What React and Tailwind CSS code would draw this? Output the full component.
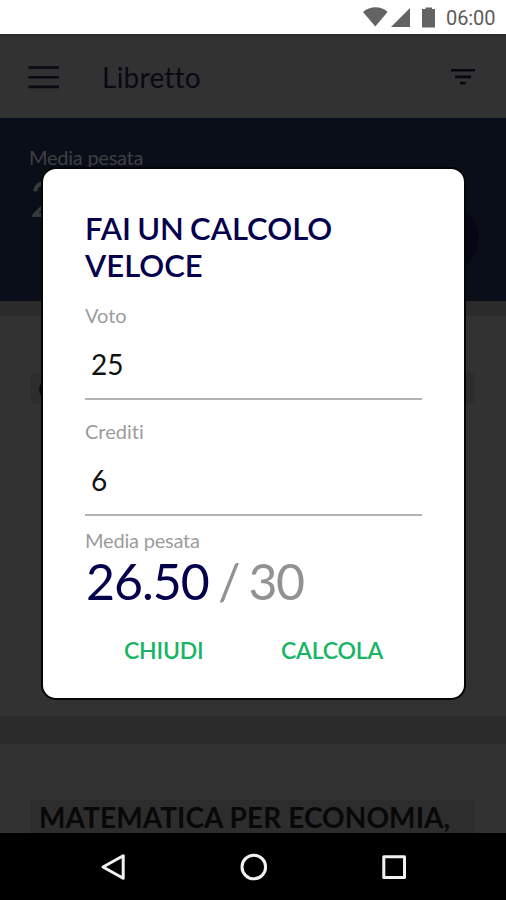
function StatusBar() {
  return (
    <header className="flex h-[34px] shrink-0 items-center justify-end bg-white pr-[10px]">
      <svg width="76" height="34" viewBox="0 0 76 34" fill="#636363" className="shrink-0">
        <path d="M0 12C7 5.8 18.5 5.8 24.5 12L12.3 26.5Z" />
        <path d="M47 8V27H28Z" />
        <path d="M62.5 7.5H69V9H72V27.5H59V9H62.5Z" />
      </svg>
      <span className="ml-[7px] w-[50px] whitespace-nowrap pt-0.5 font-[Roboto,sans-serif] text-[20px] leading-[34px] tracking-[-0.1px] text-[#5c5c5c]">06:00</span>
    </header>
  );
}

function AppBar() {
  return (
    <div className="flex h-[84px] shrink-0 items-center border-t-2 border-[#2b2b2b] pb-px pl-7 pr-[31px]">
      <svg width="31" height="24" viewBox="0 0 31 24" fill="#090a12">
        <path d="M0.5 1.2H31V3.8H0.5ZM0.5 10.9H31V13.5H0.5ZM0.5 20.6H31V23.2H0.5Z" />
      </svg>
      <h1 className="ml-[43px] flex-1 text-[28px] leading-9 tracking-[0.25px] text-[#080914]">Libretto</h1>
      <svg width="24" height="16" viewBox="0 0 24 16" fill="#060812">
        <path d="M0 0H24V2.6H0ZM4 6.5H20V9.2H4ZM9 12.8H14.6V15.6H9Z" />
      </svg>
    </div>
  );
}

function Field({ label, value, className }) {
  return (
    <label className={className}>
      <span className="block text-[20px] leading-6 text-[#9c9c9c]">{label}</span>
      <span className="mt-[18px] block h-[55px] border-b-2 border-[#b3b3b3] pl-1.5 text-[28px] leading-[38px] text-[#111111]">{value}</span>
    </label>
  );
}

function Dialog() {
  return (
    <section className="absolute left-[41px] top-[167px] flex h-[533px] w-[425px] flex-col rounded-[15px] border-2 border-[#050505] bg-white px-[42px] pt-[41px]">
      <h2 className="text-[31px] font-semibold leading-[37px] text-[#04004c] [word-spacing:-1.5px]">
        FAI UN CALCOLO
        <br />
        VELOCE
      </h2>
      <Field label="Voto" value="25" className="mt-[19px] block" />
      <Field label="Crediti" value="6" className="mt-[19px] block" />
      <p className="mt-3 text-[20px] leading-6 tracking-[-0.2px] text-[#9c9c9c]">Media pesata</p>
      <p className="ml-px whitespace-nowrap text-[50px] leading-[58px] tracking-[-1px] text-[#04004c]">
        26.50<span className="tracking-[-1.5px] text-[#929292] [word-spacing:-2px]"> / 30</span>
      </p>
      <div className="mt-[26px] flex text-[23px] font-semibold leading-7 tracking-[-0.2px] text-[#18b566]">
        <button className="ml-[39px] w-[157px] text-left">CHIUDI</button>
        <button className="text-left">CALCOLA</button>
      </div>
    </section>
  );
}

function NavBar() {
  return (
    <nav className="flex h-[67px] shrink-0 items-center justify-between bg-black pl-[99px] pr-[98px]">
      <svg width="28" height="30" viewBox="0 0 28 30" fill="none" stroke="#f2f2f2" strokeWidth="3" strokeLinejoin="round">
        <path d="M24.2 3.7V26.2L4 15Z" />
      </svg>
      <svg width="30" height="30" viewBox="0 0 30 30" fill="none" stroke="#f2f2f2" strokeWidth="3">
        <circle cx="14.8" cy="15" r="11.8" />
      </svg>
      <svg width="28" height="30" viewBox="0 0 28 30" fill="none" stroke="#f2f2f2" strokeWidth="3" strokeLinejoin="round">
        <path d="M3.8 4.7H24.5V25.4H3.8Z" />
      </svg>
    </nav>
  );
}

export default function App() {
  return (
    <main className="relative flex h-[900px] w-[506px] flex-col overflow-hidden bg-[#323232] font-[Lato,sans-serif] [font-variant-ligatures:none]">
      <StatusBar />
      <AppBar />
      <div className="relative h-[183px] shrink-0 bg-[#090e19] pl-[29px] pt-[27px]">
        <p className="text-[20px] leading-6 tracking-[-0.25px] text-[#3e4043]">Media pesata</p>
        <p className="ml-px text-[50px] leading-[58px] text-[#37393b]">2</p>
        <span className="absolute right-[27px] top-[88px] size-16 rounded-full bg-[#050814]" />
      </div>
      <div className="h-[15px] shrink-0 bg-[#2b2b2b]" />
      <div className="h-[400px] shrink-0 px-[31px] pt-[57px]">
        <div className="h-[31px] bg-[#2d2d2d] pl-[7px] text-[27px] font-semibold leading-[31px] text-[#080808]">C</div>
      </div>
      <div className="h-7 shrink-0 bg-[#2b2b2b]" />
      <div className="h-[89px] shrink-0 px-[31px] pt-14">
        <h3 className="h-[33px] whitespace-nowrap bg-[#2d2d2d] pl-2 text-[28px] font-bold leading-[34px] tracking-[0.08px] text-[#080808]">MATEMATICA PER ECONOMIA,</h3>
      </div>
      <NavBar />
      <Dialog />
    </main>
  );
}
